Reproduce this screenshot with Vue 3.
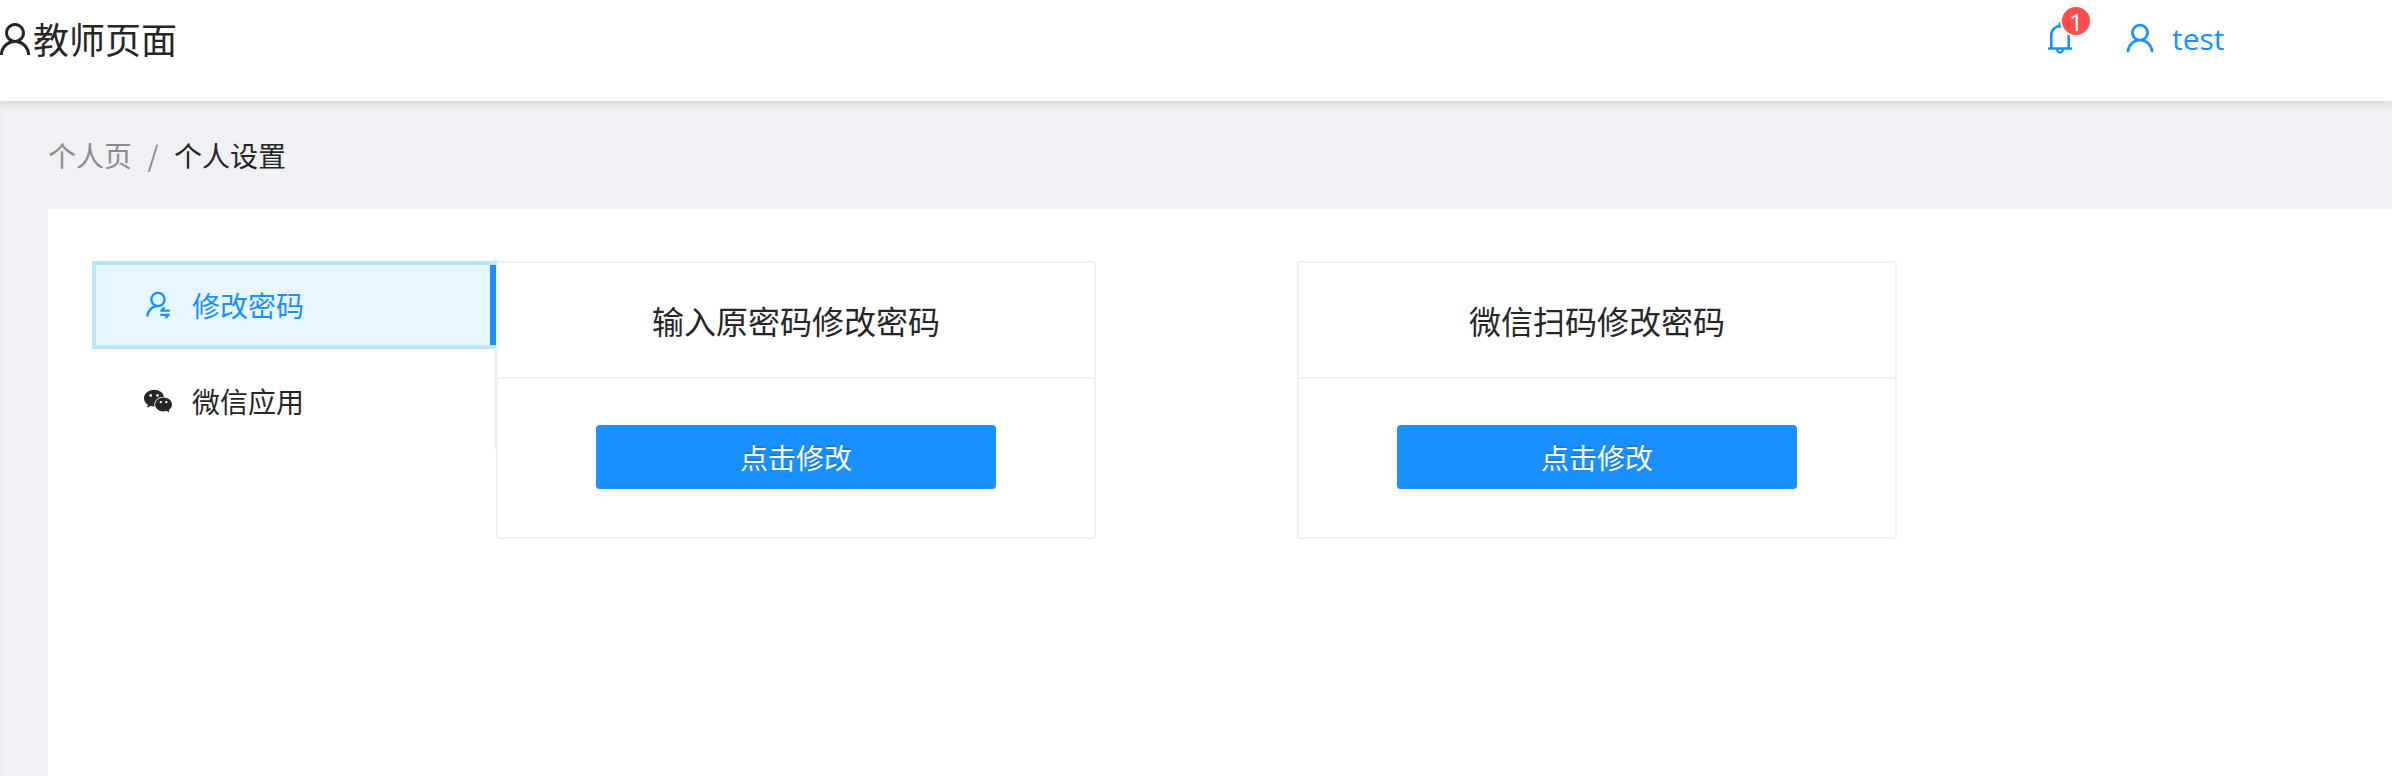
<script setup>
const userPath = 'M858.5 763.6a374 374 0 0 0-80.6-119.5 375.63 375.63 0 0 0-119.5-80.6c-.4-.2-.8-.3-1.2-.5C719.5 518 760 444.7 760 362c0-137-111-248-248-248S264 225 264 362c0 82.7 40.5 156 102.8 201.1-.4.2-.8.3-1.2.5-44.8 18.9-85 46-119.5 80.6a375.63 375.63 0 0 0-80.6 119.5A371.7 371.7 0 0 0 136 901.8a8 8 0 0 0 8 8.2h60c4.4 0 7.9-3.5 8-7.8 2-77.2 33-149.5 87.8-204.3 56.7-56.7 132-87.9 212.2-87.9s155.5 31.2 212.2 87.9C779 752.7 810 825 812 902.2c.1 4.4 3.6 7.8 8 7.8h60a8 8 0 0 0 8-8.2c-1-47.8-10.9-94.3-29.5-138.2zM512 534c-45.9 0-89.1-17.9-121.6-50.4S340 407.9 340 362c0-45.9 17.9-89.1 50.4-121.6S466.1 190 512 190s89.1 17.9 121.6 50.4S684 316.1 684 362c0 45.9-17.9 89.1-50.4 121.6S557.9 534 512 534z'
const bellPath = 'M816 768h-24V428c0-141.1-104.3-257.7-240-277.1V112c0-22.1-17.9-40-40-40s-40 17.9-40 40v38.9c-135.7 19.4-240 136-240 277.1v340h-24c-17.7 0-32 14.3-32 32v32c0 4.4 3.6 8 8 8h216c0 61.8 50.2 112 112 112s112-50.2 112-112h216c4.4 0 8-3.6 8-8v-32c0-17.7-14.3-32-32-32zM512 888c-26.5 0-48-21.5-48-48h96c0 26.5-21.5 48-48 48zM304 768V428c0-55.6 21.6-107.8 60.9-147.1S456.4 220 512 220c55.6 0 107.8 21.6 147.1 60.9S720 372.4 720 428v340H304z'
const switchPath = 'M759 335c0-137-111-248-248-248S263 198 263 335c0 82.8 40.6 156.2 103 201.2-.4.2-.7.3-.9.4-44.7 18.9-84.8 46-119.3 80.6a373.42 373.42 0 0 0-80.4 119.5A373.6 373.6 0 0 0 136 874.8a8 8 0 0 0 8 8.2h59.9c4.3 0 7.9-3.5 8-7.8 2-77.2 32.9-149.5 87.6-204.3C356 614.2 431 583 511 583c137 0 248-111 248-248zM511 507c-95 0-172-77-172-172s77-172 172-172 172 77 172 172-77 172-172 172zm105 221h264c4.4 0 8-3.6 8-8v-56c0-4.4-3.6-8-8-8H703.5l47.2-60.1a8.1 8.1 0 0 0 1.7-4.9c0-4.4-3.6-8-8-8h-72.6c-4.9 0-9.5 2.3-12.6 6.1l-68.5 87.1c-4.4 5.6-6.8 12.6-6.8 19.8.1 17.7 14.4 32 32.1 32zm240 64H592c-4.4 0-8 3.6-8 8v56c0 4.4 3.6 8 8 8h176.5l-47.2 60.1a8.1 8.1 0 0 0-1.7 4.9c0 4.4 3.6 8 8 8h72.6c4.9 0 9.5-2.3 12.6-6.1l68.5-87.1c4.4-5.6 6.8-12.6 6.8-19.8-.1-17.7-14.4-32-32.1-32z'
const wechatPath = 'M690.1 377.4c5.9 0 11.8.2 17.6.5-24.4-128.7-158.3-227.1-319.9-227.1C209 150.8 64 271.4 64 420.2c0 81.1 43.6 154.2 111.9 203.6a21.5 21.5 0 0 1 9.1 17.6c0 2.4-.5 4.6-1.1 6.9-5.5 20.3-14.2 52.8-14.6 54.3-.7 2.6-1.7 5.2-1.7 7.9 0 5.9 4.8 10.8 10.8 10.8 2.3 0 4.2-.9 6.2-2l70.9-40.9c5.3-3.1 11-5 17.2-5 3.2 0 6.4.5 9.5 1.4 33.1 9.5 68.8 14.8 105.7 14.8 6 0 11.9-.1 17.8-.4-7.1-21-10.9-43.1-10.9-66 0-135.8 132.2-245.8 295.3-245.8zm-194.3-86.5c23.8 0 43.2 19.3 43.2 43.1s-19.3 43.1-43.2 43.1c-23.8 0-43.2-19.3-43.2-43.1s19.4-43.1 43.2-43.1zm-215.9 86.2c-23.8 0-43.2-19.3-43.2-43.1s19.3-43.1 43.2-43.1 43.2 19.3 43.2 43.1-19.4 43.1-43.2 43.1zm586.8 415.6c56.9-41.2 93.2-102 93.2-169.7 0-124-120.8-224.5-269.9-224.5-149 0-269.9 100.5-269.9 224.5S540.9 847.5 690 847.5c30.8 0 60.6-4.4 88.1-12.3 2.6-.8 5.2-1.2 7.9-1.2 5.2 0 9.9 1.6 14.3 4.1l59.1 34c1.7 1 3.3 1.7 5.2 1.7a9 9 0 0 0 6.4-2.6 9 9 0 0 0 2.6-6.4c0-2.2-.9-4.4-1.4-6.6-.3-1.2-7.6-28.3-12.2-45.3-.5-1.9-.9-3.8-.9-5.7.1-5.9 3.1-11.2 7.6-14.5zM600.2 587.2c-19.9 0-36-16.1-36-35.9 0-19.8 16.1-35.9 36-35.9s36 16.1 36 35.9c0 19.8-16.2 35.9-36 35.9zm179.9 0c-19.9 0-36-16.1-36-35.9 0-19.8 16.1-35.9 36-35.9s36 16.1 36 35.9a36.08 36.08 0 0 1-36 35.9z'

const menu = [
  { label: '修改密码', icon: switchPath, active: true },
  { label: '微信应用', icon: wechatPath, active: false },
]
const cards = ['输入原密码修改密码', '微信扫码修改密码']
</script>

<template>
  <div class="page">
    <header class="header">
      <div class="brand">
        <svg class="icon" viewBox="64 64 896 896"><path :d="userPath" /></svg>
        <span class="title">教师页面</span>
      </div>
      <div class="tools">
        <span class="bell">
          <svg class="icon" viewBox="64 64 896 896"><path :d="bellPath" /></svg>
          <span class="badge">1</span>
        </span>
        <svg class="icon" viewBox="64 64 896 896"><path :d="userPath" /></svg>
        <span class="name">test</span>
      </div>
    </header>

    <main class="content">
      <nav class="crumbs">
        <span class="muted">个人页</span>
        <span class="sep">/</span>
        <span>个人设置</span>
      </nav>
      <section class="panel">
        <ul class="menu">
          <li v-for="m in menu" :key="m.label" class="item" :class="{ active: m.active }">
            <svg class="icon" viewBox="64 64 896 896"><path :d="m.icon" /></svg>
            <span>{{ m.label }}</span>
          </li>
        </ul>
        <div class="cards">
          <article v-for="c in cards" :key="c" class="card">
            <h3 class="card-head">{{ c }}</h3>
            <div class="card-body"><button class="btn" type="button">点击修改</button></div>
          </article>
        </div>
      </section>
    </main>
  </div>
</template>

<style>
body {
  margin: 0;
  overflow: hidden;
}
</style>

<style scoped>
.page {
  box-sizing: border-box;
  height: 776px;
  overflow: hidden;
  display: flex;
  flex-direction: column;
  background: #f0f1f5;
  color: #262626;
  font: 400 28px/44px 'Noto Sans CJK SC', sans-serif;
}
.icon {
  display: block;
  flex: none;
  width: 1em;
  height: 1em;
  fill: currentColor;
}
.header {
  position: relative;
  z-index: 1;
  flex: none;
  box-sizing: border-box;
  display: flex;
  justify-content: space-between;
  height: 101px;
  padding-right: 168px;
  background: #fff;
  box-shadow: 0 2px 10px rgba(0, 10, 30, 0.15);
}
.brand {
  display: flex;
  align-items: center;
  height: 78px;
  margin-left: -3px;
  font-size: 36px;
}
.title {
  padding-bottom: 2px;
}
.tools {
  display: flex;
  align-items: center;
  height: 76px;
  color: #1890ff;
  font-size: 32px;
}
.bell {
  position: relative;
  margin-right: 48px;
}
.badge {
  position: absolute;
  top: -15px;
  left: 18px;
  width: 28px;
  height: 28px;
  border-radius: 14px;
  background: #ff4d4f;
  box-shadow: 0 0 0 2px #fff;
  color: #fff;
  font: 400 24px/30px 'Open Sans', sans-serif;
  text-align: center;
}
.name {
  width: 52px;
  margin-left: 16px;
  padding-top: 2px;
  font: 400 30px/44px 'Open Sans', sans-serif;
}
.content {
  flex: 1;
  display: flex;
  flex-direction: column;
  padding-left: 48px;
  box-shadow: inset 4px 0 8px -4px rgba(0, 10, 30, 0.05);
}
.crumbs {
  display: flex;
  height: 108px;
  line-height: 108px;
}
.muted {
  color: #8c8c8c;
}
.sep {
  width: 42px;
  color: #8c8c8c;
  text-align: center;
}
.panel {
  flex: 1;
  display: flex;
  align-items: flex-start;
  padding: 48px 0 0 44px;
  background: #fff;
}
.menu {
  box-sizing: border-box;
  width: 404px;
  height: 192px;
  margin: 0;
  padding: 8px 0;
  border-right: 2px solid #f0f0f0;
  list-style: none;
  display: flex;
  flex-direction: column;
  gap: 16px;
}
.item {
  box-sizing: border-box;
  display: flex;
  align-items: center;
  gap: 20px;
  width: 404px;
  height: 80px;
  padding-left: 52px;
}
.active {
  background: #e6f7ff;
  border-right: 6px solid #1890ff;
  box-shadow: 0 0 0 4px #bae7ff;
  margin-left: 4px;
  width: 400px;
  padding-left: 48px;
  color: #1890ff;
}
.cards {
  position: relative;
  display: flex;
  gap: 201px;
  margin-top: 4px;
}
.card {
  box-sizing: border-box;
  width: 600px;
  height: 278px;
  border: 2px solid #f0f0f0;
  border-radius: 4px;
  background: #fff;
}
.card-head {
  margin: 0;
  height: 114px;
  border-bottom: 2px solid #f0f0f0;
  font-size: 32px;
  font-weight: 400;
  line-height: 114px;
  text-align: center;
}
.card-body {
  display: flex;
  justify-content: center;
  padding-top: 46px;
}
.btn {
  width: 400px;
  height: 64px;
  padding: 0;
  border: 0;
  border-radius: 4px;
  background: #1890ff;
  box-shadow: 0 4px 0 rgba(0, 0, 0, 0.045);
  color: #fff;
  font: 400 28px/64px 'Noto Sans CJK SC', sans-serif;
  text-shadow: 0 -2px 0 rgba(0, 0, 0, 0.12);
}
</style>
